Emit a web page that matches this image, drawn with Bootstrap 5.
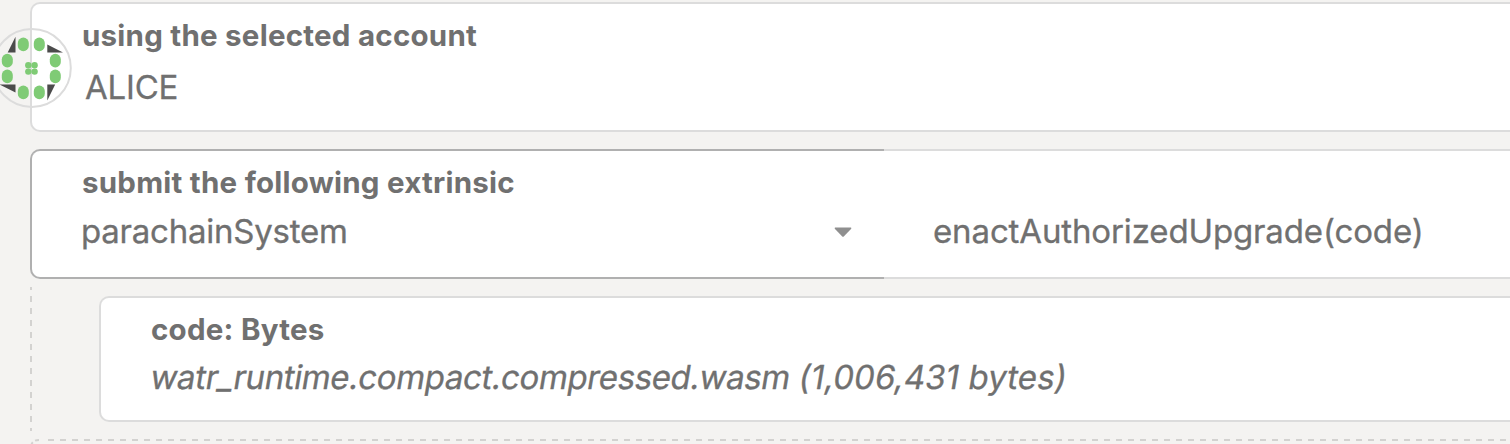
<!DOCTYPE html>
<html lang="en">
<head>
<meta charset="utf-8">
<title>Extrinsic submission</title>
<link rel="stylesheet" href="https://cdn.jsdelivr.net/npm/bootstrap@5.3.0/dist/css/bootstrap.min.css">
<style>
body{background:#f4f3f1;color:#707070;font-family:Inter,"Liberation Sans",sans-serif;height:444px}
.page{padding:2px 0 0 30px;height:444px}
.field-box{background:#fff;border:2px solid #dcdcdc;border-right:0;border-radius:10px 0 0 10px}
.account{height:130px;padding:13px 0 0 50px}
.identicon{left:-40px;top:24px}
.extrinsic{margin-top:17px;height:130px}
.section-pick{width:854px;height:130px;border-color:#b0b0b0;padding:13px 0 0 50px;flex:none}
.method-pick{border-radius:0;border-left:0;padding:13px 0 0 49px}
.field-label{font-weight:700;font-size:29.5px;line-height:36px;letter-spacing:.24px}
.field-value{font-size:33px;line-height:40px;-webkit-text-stroke:.3px currentColor}
.account-name{margin-top:14px;padding-left:3px;letter-spacing:-.2px}
.pick-row{padding-right:32px;margin-top:11px}
.pick-row svg{margin-top:2px}
.section-name{letter-spacing:-.24px;margin-left:-1px}
.method-name{margin-top:11px;letter-spacing:-.13px}
.params{margin-top:17px;height:126px;padding-left:69px}
.params::before{content:"";position:absolute;left:0;top:-9px;width:2px;height:144px;background:repeating-linear-gradient(#d3d2d0 0 3px,transparent 3px 9px,#d3d2d0 9px 12px)}
.param{height:126px;padding:13px 0 0 50px}
.file-name{margin-top:10px;width:max-content;letter-spacing:-.38px;transform:skewX(-9.5deg)}
.file-size{letter-spacing:.07px}
.next-item{margin-top:17px;height:5px}
</style>
<script src="https://cdn.jsdelivr.net/npm/bootstrap@5.3.0/dist/js/bootstrap.bundle.min.js"></script>
</head>
<body class="overflow-hidden">
<main class="page overflow-hidden text-nowrap">
  <section class="field-box account position-relative">
    <svg class="identicon position-absolute" width="80" height="80" viewBox="-8 28 80 80">
      <circle cx="31.8" cy="68" r="39" fill="none" stroke="#dcdcdc" stroke-width="2"/>
      <g fill="#7fcb75">
        <rect x="17.8" y="37.6" width="11" height="13.6" rx="5.5"/><rect x="33.8" y="37.6" width="11" height="13.6" rx="5.5"/>
        <rect x="49.8" y="53.8" width="11" height="13.6" rx="5.5"/><rect x="49.8" y="69.6" width="11" height="13.6" rx="5.5"/>
        <rect x="33.8" y="85.6" width="11" height="13.6" rx="5.5"/><rect x="17.8" y="85.6" width="11" height="13.6" rx="5.5"/>
        <rect x="1.8" y="69.6" width="11" height="13.6" rx="5.5"/><rect x="1.8" y="53.8" width="11" height="13.6" rx="5.5"/>
        <circle cx="28.3" cy="65.3" r="3.2"/><circle cx="34.6" cy="65.3" r="3.2"/><circle cx="28.3" cy="71.6" r="3.2"/><circle cx="34.6" cy="71.6" r="3.2"/>
      </g>
      <path fill="#4b4b4b" d="M15.5 36.7V52.5H7.7zM47.3 44.6L63 52.5H47.3zM-.3 84.6H15.5V92.4zM47.3 84.6H55.2L47.3 100.4z"/>
    </svg>
    <div class="field-label">using the selected account</div>
    <div class="field-value account-name">ALICE</div>
  </section>
  <section class="extrinsic d-flex">
    <div class="field-box section-pick">
      <div class="field-label">submit the following extrinsic</div>
      <div class="d-flex align-items-center justify-content-between pick-row">
        <span class="field-value section-name">parachainSystem</span>
        <svg width="18" height="11" viewBox="0 0 18 11"><path fill="#8f8f8f" d="M1.2.4H16.8Q18 .6 17 1.9L10 9.3Q9 10.3 8 9.3L1 1.9Q0 .6 1.2.4z"/></svg>
      </div>
    </div>
    <div class="field-box method-pick flex-fill">
      <div class="field-label">&nbsp;</div>
      <div class="field-value method-name">enactAuthorizedUpgrade(code)</div>
    </div>
  </section>
  <section class="params position-relative">
    <div class="field-box param">
      <div class="field-label">code: Bytes</div>
      <div class="field-value file-name">watr_runtime.compact.compressed.wasm <span class="file-size">(1,006,431 bytes)</span></div>
    </div>
  </section>
  <svg class="next-item d-block w-100"><path d="M1 9Q1 1 9 1" fill="none" stroke="#d3d2d0" stroke-width="2" stroke-dasharray="6 3"/><path d="M18 1H1500" stroke="#d3d2d0" stroke-width="2" stroke-dasharray="6 6"/></svg>
</main>
</body>
</html>
